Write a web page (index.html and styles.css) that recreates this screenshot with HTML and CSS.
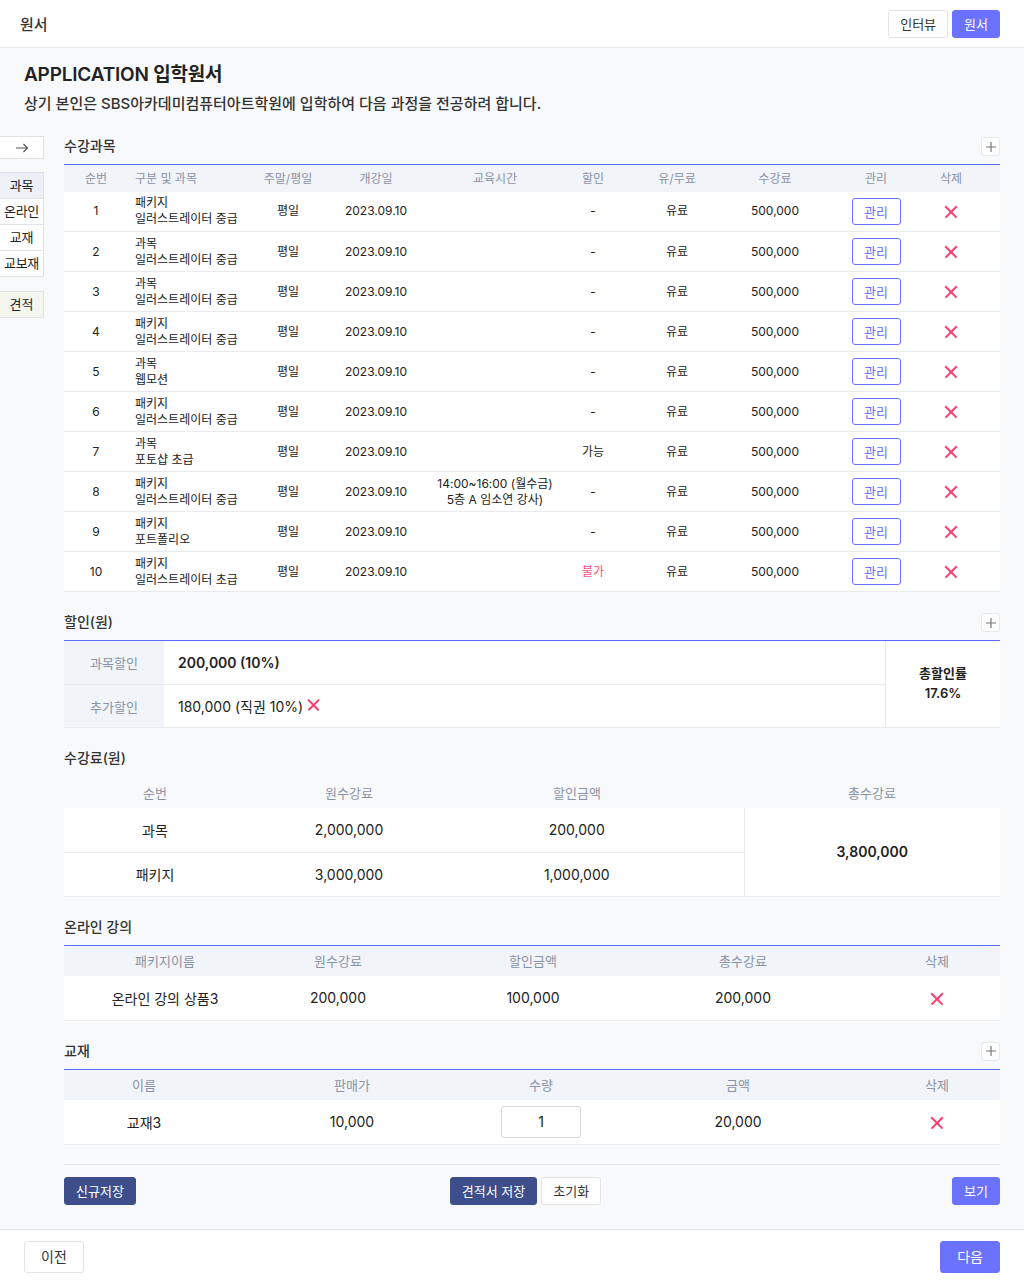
FILE: index.html
```html
<!DOCTYPE html>
<html lang="ko">
<head>
<meta charset="utf-8">
<title>원서</title>
<link rel="stylesheet" href="styles.css">
</head>
<body>
<header class="topbar">
  <div class="topbar-title">원서</div>
  <div class="topbar-actions">
    <button class="btn btn-outline">인터뷰</button>
    <button class="btn btn-primary">원서</button>
  </div>
</header>

<main class="main">
  <h1 class="page-title">APPLICATION 입학원서</h1>
  <p class="page-sub">상기 본인은 SBS아카데미컴퓨터아트학원에 입학하여 다음 과정을 전공하려 합니다.</p>

  <div class="layout">
    <aside class="sidebar">
      <div class="side-arrow">
        <svg width="14" height="10" viewBox="0 0 14 10"><path d="M1 5h11.5M8.5 1l4 4-4 4" fill="none" stroke="#555" stroke-width="1.2"/></svg>
      </div>
      <ul class="side-tabs">
        <li class="side-tab active">과목</li>
        <li class="side-tab">온라인</li>
        <li class="side-tab">교재</li>
        <li class="side-tab">교보재</li>
      </ul>
      <div class="side-quote">견적</div>
    </aside>

    <div class="content">
      <!-- 수강과목 -->
      <section class="section">
        <div class="section-head">
          <h2 class="section-title">수강과목</h2>
          <button class="plus-btn"><svg width="10" height="10" viewBox="0 0 10 10"><path d="M5 0v10M0 5h10" stroke="#777" stroke-width="1.2"/></svg></button>
        </div>
        <table class="tbl tbl-course">
          <colgroup>
            <col style="width:64px"><col style="width:122px"><col style="width:76px"><col style="width:100px"><col style="width:138px"><col style="width:58px"><col style="width:110px"><col style="width:86px"><col style="width:116px"><col style="width:66px">
          </colgroup>
          <thead>
            <tr><th>순번</th><th class="left">구분 및 과목</th><th>주말/평일</th><th>개강일</th><th>교육시간</th><th>할인</th><th>유/무료</th><th>수강료</th><th>관리</th><th class="last">삭제</th></tr>
          </thead>
          <tbody>
            <tr><td>1</td><td class="left">패키지<br>일러스트레이터 중급</td><td>평일</td><td>2023.09.10</td><td></td><td>-</td><td>유료</td><td>500,000</td><td><button class="manage">관리</button></td><td class="last"><span class="x"></span></td></tr>
            <tr><td>2</td><td class="left">과목<br>일러스트레이터 중급</td><td>평일</td><td>2023.09.10</td><td></td><td>-</td><td>유료</td><td>500,000</td><td><button class="manage">관리</button></td><td class="last"><span class="x"></span></td></tr>
            <tr><td>3</td><td class="left">과목<br>일러스트레이터 중급</td><td>평일</td><td>2023.09.10</td><td></td><td>-</td><td>유료</td><td>500,000</td><td><button class="manage">관리</button></td><td class="last"><span class="x"></span></td></tr>
            <tr><td>4</td><td class="left">패키지<br>일러스트레이터 중급</td><td>평일</td><td>2023.09.10</td><td></td><td>-</td><td>유료</td><td>500,000</td><td><button class="manage">관리</button></td><td class="last"><span class="x"></span></td></tr>
            <tr><td>5</td><td class="left">과목<br>웹모션</td><td>평일</td><td>2023.09.10</td><td></td><td>-</td><td>유료</td><td>500,000</td><td><button class="manage">관리</button></td><td class="last"><span class="x"></span></td></tr>
            <tr><td>6</td><td class="left">패키지<br>일러스트레이터 중급</td><td>평일</td><td>2023.09.10</td><td></td><td>-</td><td>유료</td><td>500,000</td><td><button class="manage">관리</button></td><td class="last"><span class="x"></span></td></tr>
            <tr><td>7</td><td class="left">과목<br>포토샵 초급</td><td>평일</td><td>2023.09.10</td><td></td><td>가능</td><td>유료</td><td>500,000</td><td><button class="manage">관리</button></td><td class="last"><span class="x"></span></td></tr>
            <tr><td>8</td><td class="left">패키지<br>일러스트레이터 중급</td><td>평일</td><td>2023.09.10</td><td class="time">14:00~16:00 (월수금)<br>5층 A 임소연 강사)</td><td>-</td><td>유료</td><td>500,000</td><td><button class="manage">관리</button></td><td class="last"><span class="x"></span></td></tr>
            <tr><td>9</td><td class="left">패키지<br>포트폴리오</td><td>평일</td><td>2023.09.10</td><td></td><td>-</td><td>유료</td><td>500,000</td><td><button class="manage">관리</button></td><td class="last"><span class="x"></span></td></tr>
            <tr><td>10</td><td class="left">패키지<br>일러스트레이터 초급</td><td>평일</td><td>2023.09.10</td><td></td><td class="red">불가</td><td>유료</td><td>500,000</td><td><button class="manage">관리</button></td><td class="last"><span class="x"></span></td></tr>
          </tbody>
        </table>
      </section>

      <!-- 할인 -->
      <section class="section">
        <div class="section-head">
          <h2 class="section-title">할인(원)</h2>
          <button class="plus-btn"><svg width="10" height="10" viewBox="0 0 10 10"><path d="M5 0v10M0 5h10" stroke="#777" stroke-width="1.2"/></svg></button>
        </div>
        <div class="discount">
          <div class="discount-rows">
            <div class="d-row">
              <div class="d-label">과목할인</div>
              <div class="d-value strong">200,000 (10%)</div>
            </div>
            <div class="d-row">
              <div class="d-label">추가할인</div>
              <div class="d-value">180,000 (직권 10%) <span class="x x-inline"></span></div>
            </div>
          </div>
          <div class="d-total">총할인률<br>17.6%</div>
        </div>
      </section>

      <!-- 수강료 -->
      <section class="section">
        <div class="section-head">
          <h2 class="section-title">수강료(원)</h2>
        </div>
        <table class="tbl tbl-fee">
          <colgroup>
            <col style="width:182px"><col style="width:206px"><col style="width:292px"><col style="width:256px">
          </colgroup>
          <thead>
            <tr><th>순번</th><th>원수강료</th><th class="pr42">할인금액</th><th>총수강료</th></tr>
          </thead>
          <tbody>
            <tr><td>과목</td><td>2,000,000</td><td class="pr42">200,000</td><td class="total" rowspan="2">3,800,000</td></tr>
            <tr><td>패키지</td><td>3,000,000</td><td class="pr42">1,000,000</td></tr>
          </tbody>
        </table>
      </section>

      <!-- 온라인 강의 -->
      <section class="section">
        <div class="section-head">
          <h2 class="section-title">온라인 강의</h2>
        </div>
        <table class="tbl tbl-simple">
          <colgroup>
            <col style="width:202px"><col style="width:144px"><col style="width:246px"><col style="width:218px"><col style="width:126px">
          </colgroup>
          <thead>
            <tr><th>패키지이름</th><th>원수강료</th><th>할인금액</th><th class="pr44">총수강료</th><th>삭제</th></tr>
          </thead>
          <tbody>
            <tr><td>온라인 강의 상품3</td><td>200,000</td><td>100,000</td><td class="pr44">200,000</td><td><span class="x"></span></td></tr>
          </tbody>
        </table>
      </section>

      <!-- 교재 -->
      <section class="section section-last">
        <div class="section-head">
          <h2 class="section-title">교재</h2>
          <button class="plus-btn"><svg width="10" height="10" viewBox="0 0 10 10"><path d="M5 0v10M0 5h10" stroke="#777" stroke-width="1.2"/></svg></button>
        </div>
        <table class="tbl tbl-simple">
          <colgroup>
            <col style="width:160px"><col style="width:256px"><col style="width:122px"><col style="width:272px"><col style="width:126px">
          </colgroup>
          <thead>
            <tr><th>이름</th><th>판매가</th><th>수량</th><th>금액</th><th>삭제</th></tr>
          </thead>
          <tbody>
            <tr><td>교재3</td><td>10,000</td><td><input class="qty" type="text" value="1"></td><td>20,000</td><td><span class="x"></span></td></tr>
          </tbody>
        </table>
      </section>

      <div class="actions">
        <button class="btn btn-navy">신규저장</button>
        <div class="actions-center">
          <button class="btn btn-navy">견적서 저장</button>
          <button class="btn btn-outline">초기화</button>
        </div>
        <button class="btn btn-primary">보기</button>
      </div>
    </div>
  </div>
</main>

<footer class="footer">
  <button class="btn btn-outline btn-lg">이전</button>
  <button class="btn btn-primary btn-lg">다음</button>
</footer>
</body>
</html>
```

FILE: styles.css
```css
* { box-sizing: border-box; }
html, body { margin: 0; padding: 0; }
body {
  font-family: Inter, "Noto Sans CJK KR", sans-serif;
  color: #222;
  background: #fff;
  width: 1024px;
}
button { font-family: inherit; cursor: pointer; }

/* top bar */
.topbar {
  height: 48px;
  display: flex;
  align-items: center;
  justify-content: space-between;
  padding: 0 24px 0 20px;
  background: #fff;
  border-bottom: 1px solid #e6e8ec;
}
.topbar-title { font-size: 15px; font-weight: 500; color: #333; }
.topbar-actions { display: flex; gap: 4px; }

.btn {
  height: 28px;
  padding: 0 11px;
  font-size: 13px;
  border-radius: 3px;
  border: 1px solid transparent;
  line-height: 26px;
}
.btn-outline { background: #fff; border-color: #e2e4e8; color: #333; }
.btn-primary { background: #6a72ff; border-color: #6a72ff; color: #fff; }
.btn-navy { background: #3d4e8a; border-color: #3d4e8a; color: #fff; }
.btn-lg { height: 32px; padding: 0 16px; font-size: 14px; }

/* main */
.main {
  background: #f8f9fb;
  padding: 13px 24px 24px 0;
  border-bottom: 1px solid #e6e8ec;
}
.page-title {
  margin: 0 0 4px 24px;
  font-size: 19px;
  line-height: 28px;
  font-weight: 600;
  color: #222;
  letter-spacing: -0.2px;
}
.page-sub {
  margin: 1px 0 21px 24px;
  font-size: 15px;
  line-height: 22px;
  font-weight: 500;
  color: #333;
}

.layout { display: flex; align-items: flex-start; }

/* sidebar */
.sidebar { width: 44px; flex: none; }
.side-arrow {
  height: 23px;
  background: #fff;
  border: 1px solid #dfe2e7;
  border-left: none;
  display: flex;
  align-items: center;
  justify-content: center;
}
.side-tabs { list-style: none; margin: 13px 0 0; padding: 0; }
.side-tab {
  height: 27px;
  border: 1px solid #dfe2e7;
  border-left: none;
  margin-top: -1px;
  background: #fff;
  font-size: 13px;
  line-height: 25px;
  text-align: center;
  color: #222;
  white-space: nowrap;
  letter-spacing: -0.3px;
}
.side-tab:first-child { margin-top: 0; }
.side-tab.active { background: #eef0f8; }
.side-quote {
  margin-top: 14px;
  height: 27px;
  border: 1px solid #dfe2e7;
  border-left: none;
  background: #f6f6f0;
  font-size: 13px;
  line-height: 25px;
  text-align: center;
}

.content { flex: 1; margin-left: 20px; }

.section { margin-bottom: 20px; }
.section-last { margin-bottom: 19px; }
.section-head {
  height: 28px;
  display: flex;
  justify-content: space-between;
  align-items: flex-start;
}
.section-title {
  margin: 0;
  font-size: 14px;
  line-height: 20px;
  font-weight: 500;
  color: #333;
}
.plus-btn {
  width: 19px;
  height: 19px;
  margin-top: 1px;
  padding: 0;
  background: #fff;
  border: 1px solid #e6e8ec;
  border-radius: 3px;
  display: flex;
  align-items: center;
  justify-content: center;
}

/* tables */
.tbl {
  width: 936px;
  table-layout: fixed;
  border-collapse: collapse;
  font-size: 12px;
}
.tbl th {
  background: #f1f4f8;
  color: #8a93a6;
  font-weight: 400;
  text-align: center;
  padding: 0;
}
.tbl td {
  background: #fff;
  text-align: center;
  padding: 0;
  color: #222;
  border-bottom: 1px solid #e8eaee;
}
.tbl .left { text-align: left; padding-left: 7px; }
.tbl .last { padding-right: 32px; }
.tbl .pr42 { padding-right: 42px; }
.tbl .pr44 { padding-right: 44px; }

.tbl-course th, .tbl-simple th { border-top: 1px solid #5a6cff; }
.tbl-course th { height: 27px; padding-bottom: 1px; }
.tbl-course td { height: 40px; line-height: 16px; }
.red { color: #ff4d7d !important; }

.manage {
  width: 49px;
  height: 27px;
  background: #fff;
  border: 1px solid #6a72ff;
  border-radius: 3px;
  color: #6a72ff;
  font-size: 13px;
  padding: 0;
  vertical-align: middle;
}

.x {
  display: inline-block;
  width: 12px;
  height: 12px;
  position: relative;
  vertical-align: middle;
}
.x::before, .x::after {
  content: "";
  position: absolute;
  left: -2px;
  top: 5px;
  width: 16px;
  height: 1.6px;
  background: #ff3b6b;
}
.x::before { transform: rotate(45deg); }
.x::after { transform: rotate(-45deg); }
.x-inline { margin-left: 5px; margin-top: -2px; width: 11px; height: 11px; }
.x-inline::before, .x-inline::after { width: 15px; left: -2px; top: 4.5px; height: 1.5px; }

/* discount */
.discount {
  display: flex;
  border-top: 1px solid #5a6cff;
  border-bottom: 1px solid #e8eaee;
  background: #fff;
}
.discount-rows { width: 821px; }
.d-row { display: flex; height: 43px; }
.d-row + .d-row { border-top: 1px solid #e8eaee; height: 43px; }
.d-label {
  width: 100px;
  background: #f1f4f8;
  color: #8a93a6;
  font-size: 13px;
  display: flex;
  align-items: center;
  justify-content: center;
}
.d-value {
  flex: 1;
  display: flex;
  align-items: center;
  padding-left: 14px;
  font-size: 14px;
  color: #222;
}
.d-value.strong { font-weight: 600; }
.d-total {
  flex: 1;
  border-left: 1px solid #e8eaee;
  display: flex;
  align-items: center;
  justify-content: center;
  text-align: center;
  font-size: 13px;
  font-weight: 600;
  line-height: 20px;
  color: #222;
  padding-bottom: 2px;
}

/* fee */
.tbl-fee { font-size: 14px; }
.tbl-fee th { background: transparent; height: 32px; font-size: 13px; }
.tbl-fee td { height: 44px; }
.tbl-fee td.total { border-left: 1px solid #e8eaee; font-weight: 600; }

/* simple tables */
.tbl-simple { font-size: 14px; }
.tbl-simple th { height: 31px; font-size: 13px; }
.tbl-simple td { height: 44px; }

.qty {
  width: 80px;
  height: 32px;
  border: 1px solid #d6d9de;
  border-radius: 3px;
  text-align: center;
  font-family: inherit;
  font-size: 14px;
  color: #222;
  vertical-align: middle;
}

/* actions */
.actions {
  display: flex;
  justify-content: space-between;
  align-items: center;
  border-top: 1px solid #e6e8ec;
  padding-top: 12px;
}
.actions-center { display: flex; gap: 4px; margin-right: 37px; }
.actions .btn { height: 28px; }

/* footer */
.footer {
  height: 55px;
  display: flex;
  justify-content: space-between;
  align-items: center;
  padding: 0 24px;
  background: #fff;
}
```
